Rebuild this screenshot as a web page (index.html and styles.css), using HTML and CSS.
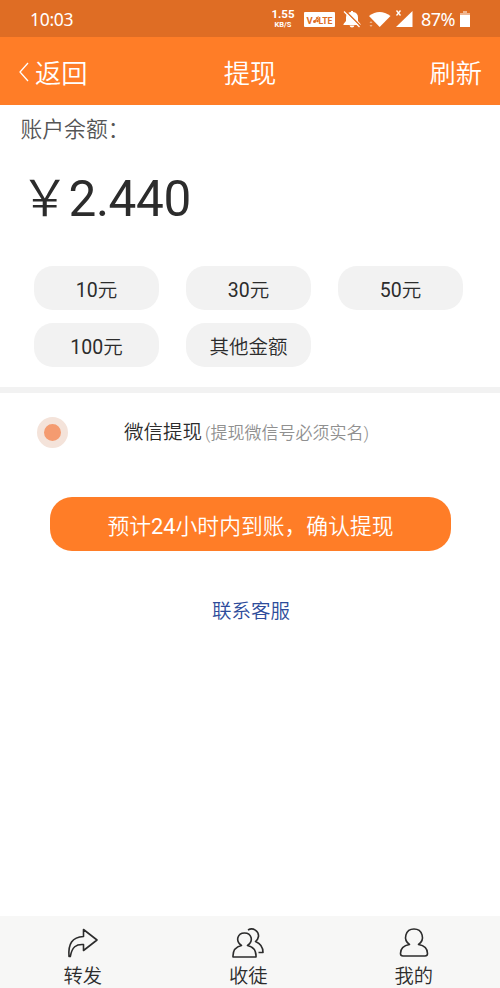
FILE: index.html
```html
<!DOCTYPE html>
<html lang="zh-CN">
<head>
<meta charset="utf-8">
<title>提现</title>
<link rel="stylesheet" href="styles.css">
</head>
<body>
<div class="status">
  <span class="time">10:03</span>
  <div class="speed"><b>1.55</b><small>KB/S</small></div>
  <svg class="status-icons" width="118" height="24" viewBox="0 0 118 24">
    <rect x="4" y="4" width="31" height="15" rx="1" fill="#fff"/>
    <text class="volte" x="6.5" y="15.5">V</text>
    <path d="M14.5 13.5l4-5M16 9.500l3 2" stroke="#df6d24" stroke-width="1.2"/>
    <circle cx="14.500" cy="13.500" r="1.500" fill="#df6d24"/>
    <circle cx="17.500" cy="13" r="1.300" fill="#df6d24"/>
    <text class="volte" x="18.500" y="15.500" textLength="14" lengthAdjust="spacingAndGlyphs">LTE</text>
    <path d="M43.500 16l2.500-3V9.500q0-5 5-5.500V3h2v1q5 .500 5 5.500V13l2.500 3v1h-17zM49.500 17.500h5q-.500 2-2.500 2t-2.500-2z" fill="#fff"/>
    <path d="M45.500 3l15 15" stroke="#df6d24" stroke-width="1.600"/>
    <path d="M44 3.500l15.500 15.500" stroke="#fff" stroke-width="1.300"/>
    <path d="M69 8q10.500-8 21.500 0L79.700 19z" fill="#fff"/>
    <path d="M69.500 15l1.500-2 1.500 2zM69.500 17l1.500 2 1.500-2z" fill="#efb58f"/>
    <path d="M96 19L112.500 3v16z" fill="#fff"/>
    <path d="M96.500 2.500l4 5M100.500 2.500l-4 5" stroke="#fff" stroke-width="1.300"/>
  </svg>
  <span class="percent">87%</span>
  <svg class="battery" width="10" height="18" viewBox="0 0 10 18"><path d="M0 2h3V0h4v2h3v3H0z" fill="#efb58f"/><path d="M0 4h10v12H0z" fill="#fff"/></svg>
</div>
<header class="header">
  <div class="back"><svg width="12" height="20" viewBox="0 0 12 20"><path d="M10 1L2 10l8 9" fill="none" stroke="#fff" stroke-width="1.300"/></svg><span>返回</span></div>
  <h1>提现</h1>
  <span class="refresh">刷新</span>
</header>
<main>
  <p class="label">账户余额：</p>
  <div class="amount"><span class="yen">￥</span><span class="num">2.440</span></div>
  <div class="chips">
    <button><span class="num">10</span>元</button><button><span class="num">30</span>元</button><button><span class="num">50</span>元</button>
    <button><span class="num">100</span>元</button><button>其他金额</button>
  </div>
  <div class="divider"></div>
  <div class="method"><i class="radio"></i><span class="name">微信提现</span><span class="note">(提现微信号必须实名)</span></div>
  <button class="confirm">预计<span class="num">24</span>小时内到账，确认提现</button>
  <a class="service">联系客服</a>
</main>
<nav>
  <div class="tab"><svg width="32" height="32" viewBox="0 0 32 32"><path d="M2 29.500C1 17 5 10 16.500 9.500V2.500L30 13 16.500 23.500V17.500C9 17 5 20 3.300 29.500z"/></svg><span>转发</span></div>
  <div class="tab"><svg width="32" height="32" viewBox="0 0 32 32"><path d="M1 30Q.500 20.500 9.500 18.500C3 14 5.500 6 12.500 6S22 14 15.500 18.500Q24.500 20.500 24 30zM16 3C21 0 27 4 26.500 9.500Q26 12.500 23.500 14.500Q31 17.500 31 25.500H26.500"/></svg><span>收徒</span></div>
  <div class="tab"><svg width="32" height="32" viewBox="0 0 32 32"><path d="M11.500 17.500C4.500 12.500 7.500 2 16 2S27.500 12.500 20.500 17.500Q29.500 19 29.500 26.500Q29.500 29 27 29H5Q2.500 29 2.500 26.500Q2.500 19 11.500 17.500z"/></svg><span>我的</span></div>
</nav>
</body>
</html>
```
FILE: styles.css
```css
* { box-sizing: border-box; }
body {
  margin: 0;
  height: 988px;
  display: flex;
  flex-direction: column;
  overflow: hidden;
  background: #fff;
  color: #2c2c2c;
  font-family: Roboto, "Noto Sans CJK SC", sans-serif;
  font-weight: 350;
}
button { border: 0; padding: 0; font: inherit; color: inherit; }
.num { font-weight: 400; }
.status {
  height: 37px;
  flex: none;
  display: flex;
  align-items: center;
  background: #df6d24;
  color: #fff;
}
.time { margin-left: 30px; width: 241px; font: 17.5px/38px "Noto Sans", sans-serif; letter-spacing: -0.3px; }
.speed { width: 24px; display: flex; flex-direction: column; align-items: center; }
.speed b { font-size: 11.5px; line-height: 11px; }
.speed small { font-size: 7.5px; font-weight: 700; line-height: 9px; }
.status-icons { margin: 2px 0 0 5px; width: 118px; flex: none; }
.volte { font: 700 9.5px Roboto, sans-serif; fill: #df6d24; }
.percent { margin-left: 3px; width: 39px; font: 18px/38px "Noto Sans", sans-serif; letter-spacing: -0.6px; }
.battery { margin: 2px 0 0 0; }
.header {
  height: 68px;
  flex: none;
  display: grid;
  grid-template-columns: 1fr auto 1fr;
  align-items: center;
  padding: 0 18px;
  background: #ff7d27;
  color: #fff;
  font-size: 26.3px;
}
.header h1 { margin: 0; font: inherit; }
.back { display: flex; align-items: center; gap: 5px; }
.back svg { margin-top: 1px; }
.refresh { text-align: right; }
main { flex: 1; display: flex; flex-direction: column; }
.label { margin: 9px 0 0 20.5px; font-size: 21.8px; line-height: 32px; color: #555; }
.amount { display: flex; align-items: center; margin: 22px 0 0 20px; height: 62px; font-size: 49.5px; line-height: 62px; letter-spacing: -0.4px; }
.yen { width: 48.5px; }
.chips {
  display: grid;
  grid-template-columns: repeat(3, 125px);
  column-gap: 27px;
  row-gap: 13px;
  margin: 36px 0 0 34px;
}
.chips button { height: 44px; border-radius: 19px; background: #f2f2f2; font-size: 19.5px; }
.divider { height: 6px; flex: none; margin-top: 20px; background: #f2f2f2; }
.method { height: 80px; display: flex; align-items: center; padding: 0 0 2px 37px; }
.radio { width: 31px; height: 31px; border: 7px solid #f4e3da; border-radius: 50%; background: #f49b70; }
.name { margin: -3px 0 0 56px; font-size: 19.5px; }
.note { margin: -1px 0 0 3px; font-size: 17px; color: #909090; }
.confirm {
  align-self: center;
  width: 401px;
  height: 54px;
  margin: 24px 0 0 1px;
  border-radius: 22px;
  background: #ff7d27;
  color: #fff;
  font-size: 21.8px;
}
.service { align-self: center; margin: 46px 0 0 2px; font-size: 19.5px; line-height: 30px; color: #2d4c9b; }
nav { height: 72px; flex: none; display: grid; grid-template-columns: repeat(3, 165.5px); background: #f7f7f6; }
.tab { display: flex; flex-direction: column; align-items: center; padding-top: 11px; font-size: 19.3px; }
.tab svg { fill: none; stroke: #2c2c2c; stroke-width: 1.6; stroke-linejoin: round; flex: none; }
.tab span { line-height: 30px; margin-top: 3px; }
```
